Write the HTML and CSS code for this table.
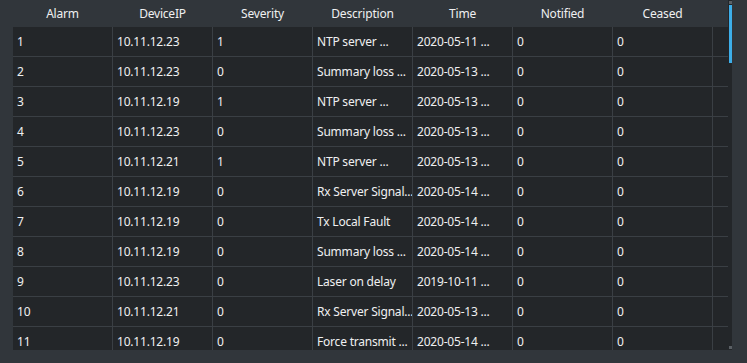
FILE: index.html
```html
<!DOCTYPE html>
<html>
<head>
<meta charset="utf-8">
<link rel="stylesheet" href="styles.css">
</head>
<body>
<div class="wrap">
  <div class="table">
    <div class="head">
      <div class="hc">Alarm</div>
      <div class="hc">DeviceIP</div>
      <div class="hc">Severity</div>
      <div class="hc">Description</div>
      <div class="hc">Time</div>
      <div class="hc">Notified</div>
      <div class="hc">Ceased</div>
    </div>
    <div class="body">
      <div class="row"><div class="c">1</div><div class="c">10.11.12.23</div><div class="c">1</div><div class="c">NTP server ...</div><div class="c">2020-05-11 ...</div><div class="c">0</div><div class="c">0</div><div class="c fill"></div></div>
      <div class="row"><div class="c">2</div><div class="c">10.11.12.23</div><div class="c">0</div><div class="c">Summary loss ...</div><div class="c">2020-05-13 ...</div><div class="c">0</div><div class="c">0</div><div class="c fill"></div></div>
      <div class="row"><div class="c">3</div><div class="c">10.11.12.19</div><div class="c">1</div><div class="c">NTP server ...</div><div class="c">2020-05-13 ...</div><div class="c">0</div><div class="c">0</div><div class="c fill"></div></div>
      <div class="row"><div class="c">4</div><div class="c">10.11.12.23</div><div class="c">0</div><div class="c">Summary loss ...</div><div class="c">2020-05-13 ...</div><div class="c">0</div><div class="c">0</div><div class="c fill"></div></div>
      <div class="row"><div class="c">5</div><div class="c">10.11.12.21</div><div class="c">1</div><div class="c">NTP server ...</div><div class="c">2020-05-13 ...</div><div class="c">0</div><div class="c">0</div><div class="c fill"></div></div>
      <div class="row"><div class="c">6</div><div class="c">10.11.12.19</div><div class="c">0</div><div class="c">Rx Server Signal...</div><div class="c">2020-05-14 ...</div><div class="c">0</div><div class="c">0</div><div class="c fill"></div></div>
      <div class="row"><div class="c">7</div><div class="c">10.11.12.19</div><div class="c">0</div><div class="c">Tx Local Fault</div><div class="c">2020-05-14 ...</div><div class="c">0</div><div class="c">0</div><div class="c fill"></div></div>
      <div class="row"><div class="c">8</div><div class="c">10.11.12.19</div><div class="c">0</div><div class="c">Summary loss ...</div><div class="c">2020-05-14 ...</div><div class="c">0</div><div class="c">0</div><div class="c fill"></div></div>
      <div class="row"><div class="c">9</div><div class="c">10.11.12.23</div><div class="c">0</div><div class="c">Laser on delay</div><div class="c">2019-10-11 ...</div><div class="c">0</div><div class="c">0</div><div class="c fill"></div></div>
      <div class="row"><div class="c">10</div><div class="c">10.11.12.21</div><div class="c">0</div><div class="c">Rx Server Signal...</div><div class="c">2020-05-13 ...</div><div class="c">0</div><div class="c">0</div><div class="c fill"></div></div>
      <div class="row"><div class="c">11</div><div class="c">10.11.12.19</div><div class="c">0</div><div class="c">Force transmit ...</div><div class="c">2020-05-14 ...</div><div class="c">0</div><div class="c">0</div><div class="c fill"></div></div>
    </div>
  </div>
  <div class="scroll">
    <div class="arrow up"></div>
    <div class="thumb"></div>
    <div class="arrow down"></div>
  </div>
</div>
</body>
</html>
```
FILE: styles.css
```css
html, body {
  margin: 0;
  padding: 0;
  background: #31363b;
  width: 747px;
  height: 363px;
  overflow: hidden;
}
body {
  font-family: "Noto Sans", "Open Sans", sans-serif;
  font-size: 12px;
  letter-spacing: -0.2px;
  color: #eff0f1;
}
.wrap {
  display: flex;
  padding-left: 13px;
  height: 350px;
}
.table {
  width: 715px;
  display: flex;
  flex-direction: column;
}
.head {
  display: flex;
  height: 27px;
  background: #31363b;
}
.hc {
  width: 100px;
  flex: none;
  display: flex;
  align-items: center;
  justify-content: center;
  padding-right: 1px;
  box-sizing: border-box;
}
.body {
  flex: 1;
  background: #232629;
  overflow: hidden;
}
.row {
  display: flex;
  height: 30px;
  box-sizing: border-box;
  border-bottom: 1px solid #3a3f44;
}
.c {
  width: 100px;
  flex: none;
  box-sizing: border-box;
  border-right: 1px solid #3a3f44;
  padding-left: 4px;
  display: flex;
  align-items: center;
  white-space: nowrap;
  overflow: hidden;
}
.c.fill {
  width: 16px;
  border-right: none;
}
.scroll {
  width: 4px;
  height: 350px;
  background: #232629;
  position: relative;
}
.thumb {
  position: absolute;
  left: 1px;
  top: 5px;
  width: 3px;
  height: 58px;
  background: #3daee9;
}
.arrow {
  position: absolute;
  left: 1px;
  width: 3px;
  height: 3px;
  background: #5a5f64;
}
.arrow.up { top: 1px; }
.arrow.down { bottom: 1px; }
```
